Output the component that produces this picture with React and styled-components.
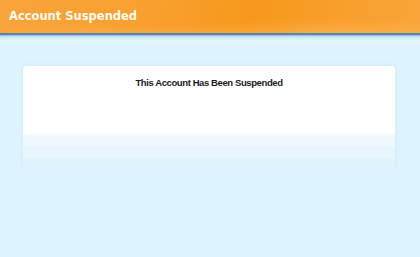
import styled, { createGlobalStyle } from "styled-components";

const GlobalStyle = createGlobalStyle`
  html, body {
    margin: 0;
    padding: 0;
    background: #ddf3fe;
  }
  body {
    min-height: 257px;
    font-family: "Liberation Sans", Arial, sans-serif;
  }
`;

const Header = styled.header`
  height: 33px;
  display: flex;
  align-items: center;
  padding-left: 9px;
  background:
    radial-gradient(ellipse 260px 30px at 330px 40px, rgba(253, 196, 110, 0.55), rgba(253, 196, 110, 0) 70%),
    radial-gradient(ellipse 240px 22px at 120px 40px, rgba(252, 190, 100, 0.45), rgba(252, 190, 100, 0) 70%),
    linear-gradient(100deg, #f9a53c 0%, #f8a030 35%, #f7981c 60%, #f9a53a 100%);
  border-bottom: 2px solid #5585b2;
`;

const Brand = styled.h1`
  margin: 0 0 1px;
  font-family: "DejaVu Sans", Verdana, sans-serif;
  font-size: 11.5px;
  font-weight: bold;
  color: #fffaf0;
`;

const Shade = styled.div`
  height: 14px;
  background: linear-gradient(#90b8d8 0px, #cde9f7 2px, #e6f6fc 6px, #ddf3fe 14px);
`;

const Main = styled.main`
  padding: 17px 25px 0 23px;
`;

const Card = styled.section`
  border-radius: 4px 4px 0 0;
  background: linear-gradient(
    #ffffff 0px,
    #ffffff 68px,
    #f1f9fe 69px,
    #eef8fe 80px,
    #e8f6fe 81px,
    #e6f5fe 92px,
    #e1f4fe 93px,
    #ddf3fe 105px
  );
  height: 105px;
  box-shadow: -1px -1px 2px rgba(205, 234, 250, 0.5), 1px -1px 2px rgba(205, 234, 250, 0.5);
  padding-top: 11px;
  box-sizing: border-box;
`;

const Message = styled.h2`
  margin: 0;
  text-align: center;
  font-size: 9.5px;
  font-weight: bold;
  letter-spacing: -0.4px;
  color: #1a1a1a;
`;

export default function App() {
  return (
    <>
      <GlobalStyle />
      <Header>
        <Brand>Account Suspended</Brand>
      </Header>
      <Shade />
      <Main>
        <Card>
          <Message>This Account Has Been Suspended</Message>
        </Card>
      </Main>
    </>
  );
}
